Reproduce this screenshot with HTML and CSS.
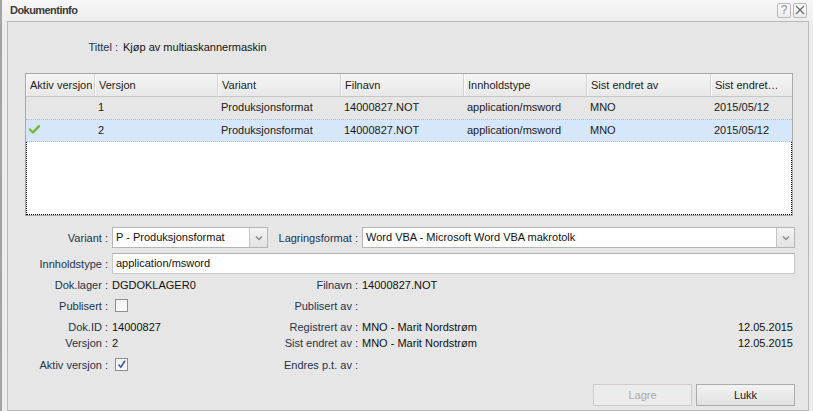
FILE: index.html
```html
<!DOCTYPE html>
<html>
<head>
<meta charset="utf-8">
<link rel="stylesheet" href="styles.css">
</head>
<body>
<div class="window">
  <div class="titlebar">
    <span class="title">Dokumentinfo</span>
    <div class="tools">
      <span class="tool">?</span>
      <span class="tool tool-x">
        <svg width="10" height="10" viewBox="0 0 10 10"><path d="M1 1 L9 9 M9 1 L1 9" stroke="#6a6a6a" stroke-width="1.2" fill="none"/></svg>
      </span>
    </div>
  </div>
  <div class="panel">
    <div class="tittel">
      <span class="tittel-label">Tittel :</span>
      <span class="tittel-value">Kjøp av multiaskannermaskin</span>
    </div>

    <div class="grid">
      <div class="grow head">
        <div class="hc">Aktiv versjon</div>
        <div class="hc">Versjon</div>
        <div class="hc">Variant</div>
        <div class="hc">Filnavn</div>
        <div class="hc">Innholdstype</div>
        <div class="hc">Sist endret av</div>
        <div class="hc ell">Sist endret…</div>
      </div>
      <div class="grow row alt">
        <div class="c"></div>
        <div class="c">1</div>
        <div class="c">Produksjonsformat</div>
        <div class="c">14000827.NOT</div>
        <div class="c">application/msword</div>
        <div class="c">MNO</div>
        <div class="c">2015/05/12</div>
      </div>
      <div class="grow row sel">
        <div class="c">
          <svg class="check" width="11" height="9" viewBox="0 0 11 9"><path d="M1 4.5 L4 7.5 L10 1.2" stroke="#7ab32e" stroke-width="2.4" fill="none" stroke-linecap="round" stroke-linejoin="round"/><path d="M1.6 4.2 L4 6.4" stroke="#a8d85a" stroke-width="0.8" fill="none"/></svg>
        </div>
        <div class="c">2</div>
        <div class="c">Produksjonsformat</div>
        <div class="c">14000827.NOT</div>
        <div class="c">application/msword</div>
        <div class="c">MNO</div>
        <div class="c">2015/05/12</div>
      </div>
      <div class="filler"></div>
    </div>

    <div class="form">
      <div class="frow r-field">
        <span class="lbl">Variant :</span>
        <div class="combo">
          <span class="combo-text">P - Produksjonsformat</span>
          <span class="combo-btn"><svg width="8" height="6" viewBox="0 0 8 6"><path d="M1 1.5 L4 4.5 L7 1.5" stroke="#8a8a8a" stroke-width="1.5" fill="none"/></svg></span>
        </div>
        <span class="lbl">Lagringsformat :</span>
        <div class="combo">
          <span class="combo-text">Word VBA - Microsoft Word VBA makrotolk</span>
          <span class="combo-btn"><svg width="8" height="6" viewBox="0 0 8 6"><path d="M1 1.5 L4 4.5 L7 1.5" stroke="#8a8a8a" stroke-width="1.5" fill="none"/></svg></span>
        </div>
      </div>
      <div class="frow r-field r-gap5">
        <span class="lbl">Innholdstype :</span>
        <div class="input wide">application/msword</div>
      </div>
      <div class="frow r-text r-gap3">
        <span class="lbl">Dok.lager :</span>
        <span class="val">DGDOKLAGER0</span>
        <span class="lbl">Filnavn :</span>
        <span class="val">14000827.NOT</span>
      </div>
      <div class="frow r-check r-gap4">
        <span class="lbl">Publisert :</span>
        <span class="val"><span class="cb"></span></span>
        <span class="lbl">Publisert av :</span>
        <span class="val"></span>
      </div>
      <div class="frow r-text r-gap5">
        <span class="lbl">Dok.ID :</span>
        <span class="val">14000827</span>
        <span class="lbl">Registrert av :</span>
        <span class="val split"><span>MNO - Marit Nordstrøm</span><span>12.05.2015</span></span>
      </div>
      <div class="frow r-text">
        <span class="lbl">Versjon :</span>
        <span class="val">2</span>
        <span class="lbl">Sist endret av :</span>
        <span class="val split"><span>MNO - Marit Nordstrøm</span><span>12.05.2015</span></span>
      </div>
      <div class="frow r-check r-gap5">
        <span class="lbl">Aktiv versjon :</span>
        <span class="val"><span class="cb checked"><svg width="11" height="11" viewBox="0 0 11 11"><path d="M2.5 5.5 L4.8 8.2 L9 1.8" stroke="#3c5a9a" stroke-width="1.6" fill="none"/></svg></span></span>
        <span class="lbl">Endres p.t. av :</span>
        <span class="val"></span>
      </div>
      <div class="buttons">
        <span class="btn disabled">Lagre</span>
        <span class="btn">Lukk</span>
      </div>
    </div>
  </div>
</div>
</body>
</html>
```

FILE: styles.css
```css
html, body {
  margin: 0;
  padding: 0;
}
body {
  width: 813px;
  height: 411px;
  overflow: hidden;
  font-family: "Liberation Sans", Arial, sans-serif;
  font-size: 11px;
  color: #111;
  background: #ececec;
}
.window {
  height: 411px;
  box-sizing: border-box;
  border-left: 2px solid #a4a4a4;
  background: linear-gradient(#f7f7f7, #ededed 21px, #ececec);
  display: flex;
  flex-direction: column;
}
.titlebar {
  height: 21px;
  display: flex;
  align-items: center;
  justify-content: space-between;
  padding: 0 6px 0 8px;
  flex: none;
}
.title {
  font-weight: bold;
  color: #3b3b3b;
  letter-spacing: -0.55px;
  margin-top: -1px;
}
.tools {
  display: flex;
  gap: 2px;
  margin-top: -1px;
}
.tool {
  width: 12px;
  height: 13px;
  border: 1px solid #b9b9b9;
  border-radius: 2px;
  background: linear-gradient(#fdfdfd, #ececec);
  color: #8a8a8a;
  font-size: 12px;
  line-height: 13px;
  text-align: center;
  display: flex;
  align-items: center;
  justify-content: center;
}
.panel {
  flex: 1;
  margin: 0 4px 0 5px;
  border: 1px solid #b8b8b8;
  background: #e6e6e6;
  padding: 0 13px 0 0;
}
.tittel {
  display: flex;
  height: 16px;
  align-items: center;
  margin-top: 17px;
}
.tittel-label {
  width: 110px;
  text-align: right;
  color: #22344c;
}
.tittel-value {
  margin-left: 5px;
  color: #111;
}

/* grid */
.grid {
  margin: 18px 2px 0 17px;
  border: 1px solid #a9a9a9;
  background: #fff;
  display: flex;
  flex-direction: column;
}
.grow {
  display: grid;
  grid-template-columns: 69px 123px 123px 123px 123px 124px 1fr;
}
.head {
  height: 22px;
  background: linear-gradient(#f5f5f5, #e8e8e8);
  border-bottom: 1px solid #c6c6c6;
}
.hc {
  padding-left: 3px;
  line-height: 22px;
  border-right: 1px solid #d2d2d2;
  border-left: 1px solid #fbfbfb;
  color: #1c1c1c;
  white-space: nowrap;
  overflow: hidden;
}
.hc:last-child {
  border-right: none;
}
.row {
  height: 21px;
}
.c {
  padding-left: 3px;
  line-height: 21px;
  color: #1a1a1a;
  white-space: nowrap;
  overflow: hidden;
  display: flex;
  align-items: center;
}
.alt {
  background: #e6e6e6;
  border-bottom: 1px dotted #e6e6e6;
}
.sel {
  background: #d7e7fb;
  border-top: 1px dotted #a2bde8;
  border-bottom: 1px dotted #a2bde8;
}
.check {
  margin-top: -2px;
}
.filler {
  height: 72px;
  border: 1px dotted #000;
  border-top: none;
}

/* form */
.form {
  margin-top: 11px;
}
.frow {
  display: grid;
  grid-template-columns: 100px 156px 86px 1fr;
  column-gap: 4px;
  align-items: center;
}
.r-field { height: 21px; }
.r-text { height: 16px; }
.r-check { height: 17px; }
.r-gap5 { margin-top: 5px; }
.r-gap4 { margin-top: 4px; }
.r-gap3 { margin-top: 3px; }
.lbl {
  text-align: right;
  color: #22344c;
  white-space: nowrap;
}
.val {
  color: #111;
  white-space: nowrap;
  display: flex;
  align-items: center;
}
.split {
  justify-content: space-between;
  padding-right: 2px;
}
.combo {
  height: 21px;
  box-sizing: border-box;
  border: 1px solid #b5b5b5;
  background: #fff;
  display: flex;
  align-items: stretch;
}
.combo-text {
  flex: 1;
  padding-left: 3px;
  line-height: 19px;
  color: #111;
  white-space: nowrap;
  overflow: hidden;
}
.combo-btn {
  width: 17px;
  border-left: 1px solid #c4c4c4;
  background: linear-gradient(#f4f4f4, #e2e2e2);
  display: flex;
  align-items: center;
  justify-content: center;
}
.input {
  height: 21px;
  box-sizing: border-box;
  border: 1px solid #c8c8c8;
  border-top-color: #b0b0b0;
  background: #fff;
  padding-left: 3px;
  line-height: 19px;
  color: #111;
}
.wide {
  grid-column: 2 / 5;
}
.cb {
  width: 11px;
  height: 11px;
  border: 1px solid #8e8f8f;
  background: linear-gradient(#f0f0f0, #fdfdfd);
  margin-left: 3px;
  display: flex;
  align-items: center;
  justify-content: center;
}
.buttons {
  display: flex;
  justify-content: flex-end;
  gap: 4px;
  margin-top: 11px;
  margin-right: 0;
}
.btn {
  width: 97px;
  height: 20px;
  border: 1px solid #ababab;
  background: linear-gradient(#f3f3f3, #e1e1e1);
  text-align: center;
  line-height: 20px;
  color: #1a1a1a;
}
.btn.disabled {
  border-color: #cfc9c9;
  background: #ececec;
  color: #a9a9a9;
}
```
